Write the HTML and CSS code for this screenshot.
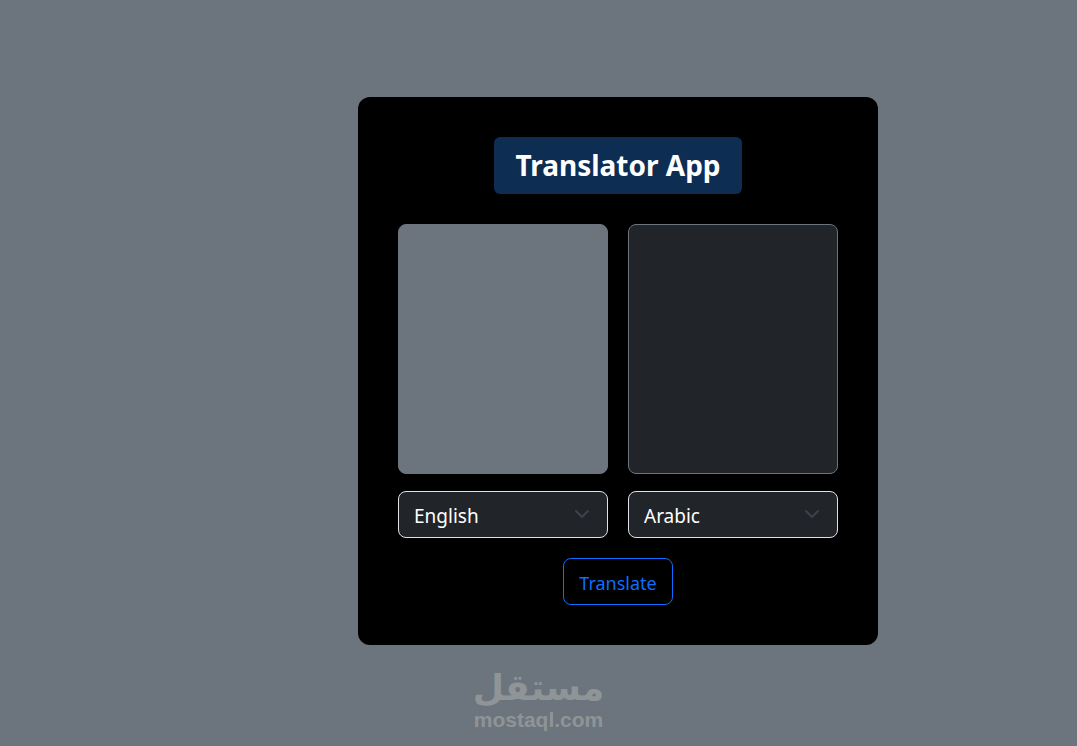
FILE: index.html
```html
<!DOCTYPE html>
<html lang="en">
<head>
    <meta charset="UTF-8">
    <meta name="viewport" content="width=device-width, initial-scale=1.0">
    <title>Translator App</title>
    <link rel="stylesheet" href="styles.css">
</head>
<body>
    <main class="page">
        <form class="card">
            <h1 class="title">Translator App</h1>

            <div class="columns">
                <textarea class="text-box source" id="source" aria-label="Text to translate"></textarea>
                <textarea class="text-box" id="result" aria-label="Translation" readonly></textarea>

                <div class="select-wrap">
                    <select class="language" id="from" aria-label="Translate from">
                        <option selected>English</option>
                        <option>Arabic</option>
                    </select>
                    <svg class="chevron" viewBox="0 0 16 16" aria-hidden="true"><path d="m2 5 6 6 6-6"/></svg>
                </div>
                <div class="select-wrap">
                    <select class="language" id="to" aria-label="Translate to">
                        <option>English</option>
                        <option selected>Arabic</option>
                    </select>
                    <svg class="chevron" viewBox="0 0 16 16" aria-hidden="true"><path d="m2 5 6 6 6-6"/></svg>
                </div>
            </div>

            <button class="translate" type="button">Translate</button>
        </form>
    </main>

    <div class="watermark">
        <span class="watermark-name" lang="ar" dir="rtl">مستقل</span>
        <span class="watermark-site">mostaql.com</span>
    </div>
</body>
</html>
```

FILE: styles.css
```css
* {
    box-sizing: border-box;
}
body {
    margin: 0;
    min-height: 100vh;
    background-color: #6c757d;
    font-family: "Segoe UI", "Noto Sans", sans-serif;
    position: relative;
}
.page {
    padding: 97px 0 100px 159px;
}
.card {
    display: flex;
    flex-direction: column;
    align-items: center;
    max-width: 520px;
    margin: 0 auto;
    padding: 40px;
    background-color: #000;
    border-radius: 12px;
}
.title {
    margin: 0 0 30px;
    padding: 10px 21px;
    background-color: #0d2d53;
    border-radius: 6px;
    color: #fff;
    font-size: 28px;
    font-weight: 700;
    line-height: 37px;
}
.columns {
    display: grid;
    grid-template-columns: 1fr 1fr;
    gap: 17px 20px;
    width: 100%;
    margin-bottom: 20px;
}
.text-box {
    display: block;
    width: 100%;
    height: 250px;
    padding: 8px 16px;
    border: 1px solid #6c757d;
    border-radius: 8px;
    background-color: #212529;
    color: #fff;
    font: inherit;
    font-size: 19px;
    resize: none;
}
.source {
    background-color: #6c757d;
}
.select-wrap {
    position: relative;
}
.language {
    display: block;
    appearance: none;
    width: 100%;
    height: 47px;
    padding: 9px 48px 7px 15px;
    border: 1px solid #dee2e6;
    border-radius: 8px;
    background-color: #212529;
    color: #fff;
    font: inherit;
    font-size: 19px;
}
.chevron {
    position: absolute;
    top: 15px;
    right: 18px;
    width: 16px;
    height: 16px;
    fill: none;
    stroke: #3d4248;
    stroke-width: 2;
    stroke-linecap: round;
    stroke-linejoin: round;
    pointer-events: none;
}
.translate {
    height: 47px;
    padding: 9px 15px 7px;
    border: 1px solid #0d6efd;
    border-radius: 8px;
    background-color: transparent;
    color: #0d6efd;
    font: inherit;
    font-size: 18px;
    cursor: pointer;
}
.translate:hover {
    background-color: #0d6efd;
    color: #fff;
}
.watermark {
    position: absolute;
    right: 0;
    bottom: 14px;
    left: 0;
    display: flex;
    flex-direction: column;
    align-items: center;
    color: #8f9497;
    font-weight: 700;
    pointer-events: none;
}
.watermark-name {
    font-family: "DejaVu Sans", sans-serif;
    font-size: 36px;
    line-height: 40px;
}
.watermark-site {
    font-family: "Liberation Sans", Arial, sans-serif;
    font-size: 21px;
    line-height: 24px;
}
```
